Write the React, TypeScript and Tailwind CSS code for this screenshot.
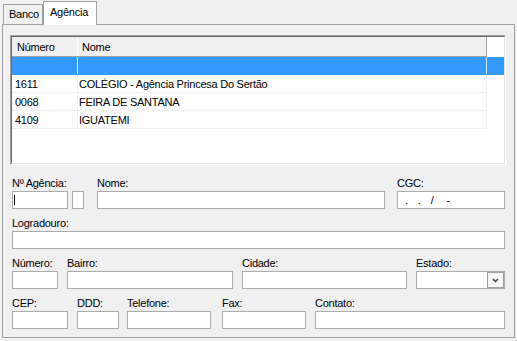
import React from "react";

const rows = [
  { num: "", nome: "", sel: true },
  { num: "1611", nome: "COLÉGIO - Agência Princesa Do Sertão" },
  { num: "0068", nome: "FEIRA DE SANTANA" },
  { num: "4109", nome: "IGUATEMI" },
];

function Field({ label, width, ml = 0, children }: { label: string; width: number; ml?: number; children?: React.ReactNode }) {
  return (
    <div className="flex flex-col" style={{ width, marginLeft: ml }}>
      <div className="h-[14px] leading-[13px] whitespace-nowrap">{label}</div>
      <div className="relative h-[18px] border border-[#ababab] bg-white">{children}</div>
    </div>
  );
}

export default function App() {
  return (
    <div
      className="h-[341px] w-[517px] overflow-hidden bg-[#f0f0f0] text-[11px] text-black"
      style={{ fontFamily: '"Liberation Sans", Arial, sans-serif', letterSpacing: "-0.25px" }}
    >
      {/* tabs */}
      <div className="flex h-[24px] items-end pl-[3px]">
        <div className="h-[20px] w-[40px] border border-b-0 border-[#a0a0a0] bg-[#f0f0f0] pl-[5px] leading-[19px]">Banco</div>
        <div className="relative z-10 -mb-px h-[24px] w-[54px] border border-b-0 border-[#a0a0a0] bg-white pl-[6px] leading-[21px]">Agência</div>
      </div>

      {/* panel */}
      <div className="ml-[2px] h-[314px] w-[513px] border border-[#a0a0a0] bg-[#f0f0f0]">
        {/* list view */}
        <div className="ml-[7px] mt-[10px] h-[130px] w-[496px] border border-t-[#a0a0a0] border-l-[#a0a0a0] border-r-white border-b-white">
          <div className="h-full w-full border border-t-[#696969] border-l-[#696969] border-r-[#e3e3e3] border-b-[#e3e3e3] bg-white">
            <div className="flex h-[20px]">
              <div className="flex w-[475px] border-b border-[#a0a0a0] bg-[#f0f0f0]">
                <div className="w-[66px] border-r border-white pl-[5px] leading-[20px]">Número</div>
                <div className="flex-1 border-r border-[#a0a0a0] pl-[4px] leading-[20px]">Nome</div>
              </div>
            </div>
            {rows.map((r, i) => (
              <div key={i} className={`flex h-[18px] ${r.sel ? "bg-[#3399ff]" : ""}`}>
                <div className={`flex w-[475px] border-b ${r.sel ? "border-[#3399ff]" : "border-[#f0f0f0]"}`}>
                  <div className={`w-[66px] border-r pl-[3px] leading-[19px] ${r.sel ? "border-white" : "border-[#f0f0f0]"}`}>{r.num}</div>
                  <div className={`flex-1 border-r pl-[1px] leading-[19px] ${r.sel ? "border-[#cfe6ff]" : "border-[#f0f0f0]"}`}>{r.nome}</div>
                </div>
              </div>
            ))}
          </div>
        </div>

        {/* form */}
        <div className="ml-[9px] mt-[12px] flex w-[493px] flex-col gap-[8px]">
          <div className="flex items-end">
            <Field label="Nº Agência:" width={56}>
              <div className="absolute left-[1px] top-[3px] h-[10px] w-px bg-black" />
            </Field>
            <div className="ml-[4px] h-[18px] w-[12px] border border-[#ababab] bg-white" />
            <Field label="Nome:" width={288} ml={13} />
            <Field label="CGC:" width={108} ml={12}>
              <div className="absolute left-0 top-0 flex h-full items-center leading-none">
                <span className="ml-[7px]">.</span>
                <span className="ml-[10px]">.</span>
                <span className="ml-[10px]">/</span>
                <span className="ml-[13px]">-</span>
              </div>
            </Field>
          </div>
          <div className="flex">
            <Field label="Logradouro:" width={493} />
          </div>
          <div className="flex">
            <Field label="Número:" width={46} />
            <Field label="Bairro:" width={166} ml={9} />
            <Field label="Cidade:" width={165} ml={9} />
            <Field label="Estado:" width={89} ml={9}>
              <div className="absolute right-0 top-0 flex h-[16px] w-[17px] items-center justify-center border border-[#a0a0a0] bg-[#f7f7f7]">
                <svg width="7" height="5" viewBox="0 0 7 5">
                  <path d="M1 1 L3.5 3.5 L6 1" fill="none" stroke="#404040" strokeWidth="1.5" />
                </svg>
              </div>
            </Field>
          </div>
          <div className="flex">
            <Field label="CEP:" width={56} />
            <Field label="DDD:" width={42} ml={9} />
            <Field label="Telefone:" width={84} ml={8} />
            <Field label="Fax:" width={84} ml={11} />
            <Field label="Contato:" width={190} ml={9} />
          </div>
        </div>
      </div>
    </div>
  );
}
